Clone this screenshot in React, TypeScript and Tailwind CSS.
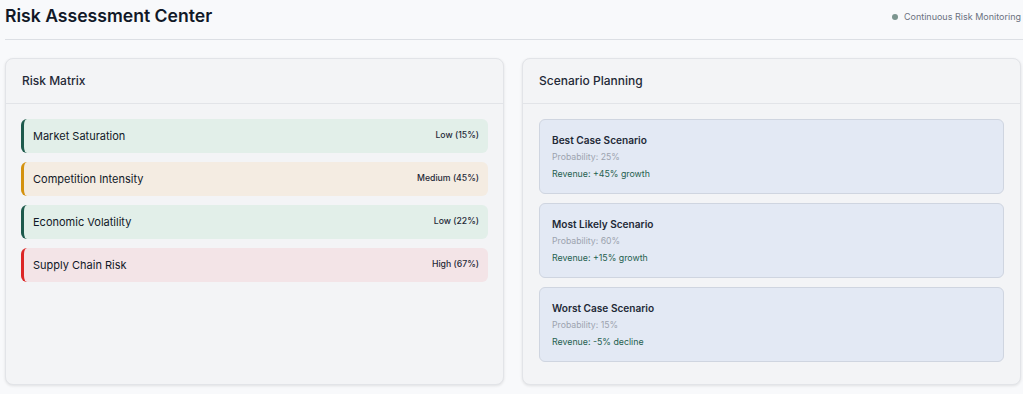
const risks = [
  { name: 'Market Saturation', level: 'Low (15%)', tone: 'low' },
  { name: 'Competition Intensity', level: 'Medium (45%)', tone: 'medium' },
  { name: 'Economic Volatility', level: 'Low (22%)', tone: 'low' },
  { name: 'Supply Chain Risk', level: 'High (67%)', tone: 'high' },
];

const toneClasses: Record<string, string> = {
  low: 'bg-[#e2efe9] border-[#1d5a4c]',
  medium: 'bg-[#f4ece2] border-[#d4920f]',
  high: 'bg-[#f3e4e7] border-[#dc2626]',
};

const scenarios = [
  { title: 'Best Case Scenario', probability: '25%', revenue: '+45% growth' },
  { title: 'Most Likely Scenario', probability: '60%', revenue: '+15% growth' },
  { title: 'Worst Case Scenario', probability: '15%', revenue: '-5% decline' },
];

function Panel({ title, children }: { title: string; children: React.ReactNode }) {
  return (
    <section className="bg-[#f3f4f6] border border-[#e2e4e8] rounded-lg shadow-[0_1px_3px_rgba(0,0,0,0.1)] flex flex-col">
      <div className="h-[45px] flex items-center px-4 border-b border-[#e2e4e8]">
        <h3 className="text-[12px] font-medium text-[#1f2937]">{title}</h3>
      </div>
      {children}
    </section>
  );
}

export default function App() {
  return (
    <div
      className="min-h-screen bg-[#f8f9fb] pl-[5px] text-[#1f2937]"
      style={{ fontFamily: 'Inter, "Noto Sans", sans-serif' }}
    >
      <header className="flex items-center justify-between h-[40px] border-b border-[#dcdfe4] pb-[6px]">
        <h1 className="text-[17.6px] font-semibold text-[#111827]">Risk Assessment Center</h1>
        <div className="flex items-center gap-[6px] pr-[2px] text-[9px] text-[#6b7280]">
          <span className="w-[6px] h-[6px] rounded-full bg-[#7c958f]" />
          Continuous Risk Monitoring
        </div>
      </header>

      <main className="grid grid-cols-2 gap-[18px] w-[1016px] mt-[18px]">
        <Panel title="Risk Matrix">
          <div className="px-[15px] pt-[15px] flex flex-col gap-[9px]">
            {risks.map(r => (
              <div
                key={r.name}
                className={`h-[34px] flex items-center justify-between rounded-md border-l-[3px] pl-[9px] pr-[9px] ${toneClasses[r.tone]}`}
              >
                <span className="text-[11px] text-[#111827]">{r.name}</span>
                <span className="text-[8.7px] font-medium text-[#1f2937]">{r.level}</span>
              </div>
            ))}
          </div>
        </Panel>

        <Panel title="Scenario Planning">
          <div className="px-4 pt-[15px] pb-[22px] flex flex-col gap-[9px]">
            {scenarios.map(s => (
              <div
                key={s.title}
                className="h-[75px] rounded-md border border-[#cfd5e0] bg-[#e3e9f4] px-3 pt-[12px]"
              >
                <h4 className="text-[10.1px] font-semibold text-[#1f2937] leading-[16px]">{s.title}</h4>
                <p className="text-[8.7px] text-[#9ca3af] mt-[2px] leading-[14px]">Probability: {s.probability}</p>
                <p className="text-[8.8px] text-[#1f5f4f] mt-[3px] leading-[14px]">Revenue: {s.revenue}</p>
              </div>
            ))}
          </div>
        </Panel>
      </main>
    </div>
  );
}
